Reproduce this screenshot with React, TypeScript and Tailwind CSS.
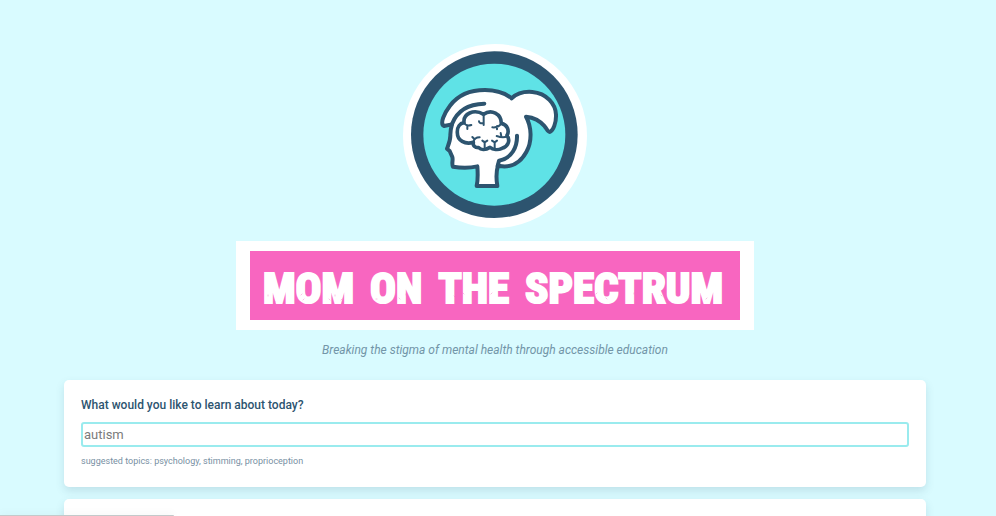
function Logo() {
  return (
    <svg viewBox="24 28 552 552" className="size-46" role="img" aria-label="Mom on the Spectrum logo">
      <circle cx="300" cy="304" r="276" fill="#fff" />
      <circle cx="298" cy="300" r="250" fill="#2d546f" />
      <circle cx="298" cy="300" r="213" fill="#5fe2e6" />
      <g fill="#fff" stroke="#2d546f" strokeWidth="12" strokeLinecap="round" strokeLinejoin="round">
        <path d="M147 274C134 268 147 236 165 213C190 180 226 166 270 166C309 166 334 178 350 191C366 176 388 170 412 172C455 176 482 208 483 240C484 265 474 288 466 291C459 295 456 283 449 275C432 254 415 248 393 246C410 276 412 320 394 352C376 385 347 400 314 394L309 392C303 412 304 436 307 454H245C250 432 248 411 247 395C221 401 192 399 174 396C169 387 175 377 172 367L164 349L156 342C161 329 167 317 166 300C166 287 168 279 171 269Z" />
        <path d="M268 207C223 208 187 226 171 268" fill="none" />
        <path d="M366 303C367 335 352 371 312 378L308 394" fill="none" />
      </g>
      <g fill="none" stroke="#2d546f" strokeWidth="11" strokeLinecap="round" strokeLinejoin="round">
        <path fill="#fff" d="M207 264C204 238 236 221 266 239C289 222 319 238 319 266C337 269 344 289 336 302C347 317 339 337 321 341C309 347 294 345 285 338C272 346 258 347 251 339C239 339 233 333 235 323C210 331 187 317 187 294C186 277 195 266 207 264Z" />
        <g strokeWidth="6">
          <path d="M207 264Q213 276 229 271M217 273V283" />
          <path d="M266 239V271M266 265Q253 268 252 260" />
          <path d="M319 266Q311 280 292 278M306 275V284" />
          <path d="M336 305Q325 311 305 304M319 305L317 295" />
          <path d="M235 323Q238 308 254 308M238 313L232 307" />
          <path d="M269 341V321M262 318L269 323L277 318" />
          <path d="M299 341V322M291 318L299 323L306 318" />
        </g>
      </g>
    </svg>
  );
}

function Banner() {
  return (
    <div className="mt-[13px] w-[518px] max-w-full bg-white px-[14px] py-[10px]">
      <div className="relative flex h-[69px] items-center justify-center overflow-hidden bg-[#f866c0]">
        <h1 className="pt-[6px] pr-1 font-['Roboto_Condensed','Liberation_Sans_Narrow',sans-serif] text-[43px] leading-none font-extrabold whitespace-nowrap text-white [-webkit-text-stroke:2px_white]">
          MOM <span className="ml-[6px]">ON</span> <span className="ml-[6px]">THE</span>{" "}
          <span className="ml-[6px]">SPECTRUM</span>
        </h1>
        <svg
          viewBox="0 0 490 69"
          className="absolute inset-0 size-full"
          fill="none"
          stroke="#f866c0"
          strokeLinecap="round"
          strokeWidth="0.8"
          opacity="0.5"
          aria-hidden="true"
        >
          <path d="M18 44v1M24 49l1 1M51 44l1-1M53 49l1-1M58 40v1M79 48l1 1M85 44v1M91 49l1-1M120 46l1 1M126 48h1M131 41l1-1M149 47l1 1M156 43v1M187 38l1 1M204 45l1 1M213 42l1 1M226 48l1-1M241 43l1-1M275 45l1 1M296 49l1-1M317 45l1 1M346 43l1-1M356 47l1 1M384 42v1M411 44l1 1M439 45l1-1M456 48l1-1" />
        </svg>
      </div>
    </div>
  );
}

export default function App() {
  return (
    <div className="relative h-screen overflow-hidden bg-[#d9fbff] pt-11 pr-[70px] pl-16 font-['Roboto','Liberation_Sans',sans-serif]">
      <header className="flex flex-col items-center">
        <Logo />
        <Banner />
        <p className="mt-[10px] text-[12px] leading-5 text-[#7295a8] italic">
          Breaking the stigma of mental health through accessible education
        </p>
      </header>
      <main className="mt-5 flex flex-col gap-3">
        <section className="rounded-[5px] bg-white px-[17px] pt-4 pb-[18px] shadow-[0_4px_8px_rgba(45,84,111,0.15)]">
          <label htmlFor="topic" className="block text-[12px] leading-[18px] font-medium text-[#2d546f]">
            What would you like to learn about today?
          </label>
          <input
            id="topic"
            type="text"
            placeholder="autism"
            aria-describedby="topic-hint"
            className="mt-2 block h-[25px] w-full rounded-[3px] border-2 border-[#9aebee] bg-white px-px text-[13px] text-gray-700 outline-none placeholder:text-[#7b7b7b]"
          />
          <p id="topic-hint" className="mt-[6px] text-[9px] leading-4 text-[#7890a3]">
            suggested topics: psychology, stimming, proprioception
          </p>
        </section>
        <section className="h-24 rounded-[5px] bg-white shadow-[0_4px_8px_rgba(45,84,111,0.15)]" />
      </main>
      <div className="absolute bottom-0 left-0 h-px w-[174px] rounded-tr-sm bg-[#c3c9ca] shadow-[0_0_8px_rgba(0,0,0,0.2)]" />
    </div>
  );
}
